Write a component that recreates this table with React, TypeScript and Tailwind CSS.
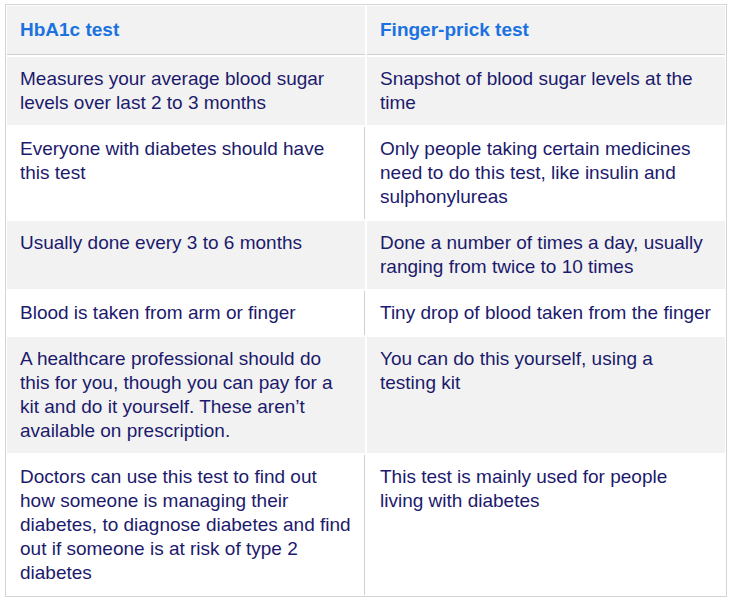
import React from "react";

const rows: [string, string][] = [
  [
    "Measures your average blood sugar levels over last 2 to 3 months",
    "Snapshot of blood sugar levels at the time",
  ],
  [
    "Everyone with diabetes should have this test",
    "Only people taking certain medicines need to do this test, like insulin and sulphonylureas",
  ],
  [
    "Usually done every 3 to 6 months",
    "Done a number of times a day, usually ranging from twice to 10 times",
  ],
  ["Blood is taken from arm or finger", "Tiny drop of blood taken from the finger"],
  [
    "A healthcare professional should do this for you, though you can pay for a kit and do it yourself. These aren\u2019t available on prescription.",
    "You can do this yourself, using a testing kit",
  ],
  [
    "Doctors can use this test to find out how someone is managing their diabetes, to diagnose diabetes and find out if someone is at risk of type 2 diabetes",
    "This test is mainly used for people living with diabetes",
  ],
];

export default function App() {
  return (
    <div
      className="bg-white w-[734px] h-[608px] pt-[4px] pl-[5px]"
      style={{ fontFamily: '"Liberation Sans", Arial, sans-serif' }}
    >
      <div className="w-[722px] border border-[#d4d4d4] p-px grid grid-cols-2 gap-[2px] text-[19px] leading-[24px] text-[#1c1a6c]">
        <div className="bg-[#f2f2f2] border-b border-[#d0d0d0] px-[13px] py-3 font-bold text-[#1b72e0]">
          HbA1c test
        </div>
        <div className="bg-[#f2f2f2] border-b border-[#d0d0d0] px-[13px] py-3 font-bold text-[#1b72e0]">
          Finger-prick test
        </div>
        {rows.map(([a, b], i) => {
          const gray = i % 2 === 0;
          return (
            <React.Fragment key={i}>
              <div
                className={
                  gray
                    ? "bg-[#f2f2f2] px-[13px] py-[10px]"
                    : "bg-white px-[13px] py-[10px] border-r border-[#d0d0d0]"
                }
              >
                {a}
              </div>
              <div className={gray ? "bg-[#f2f2f2] px-[13px] py-[10px]" : "bg-white px-[13px] py-[10px]"}>
                {b}
              </div>
            </React.Fragment>
          );
        })}
      </div>
    </div>
  );
}
